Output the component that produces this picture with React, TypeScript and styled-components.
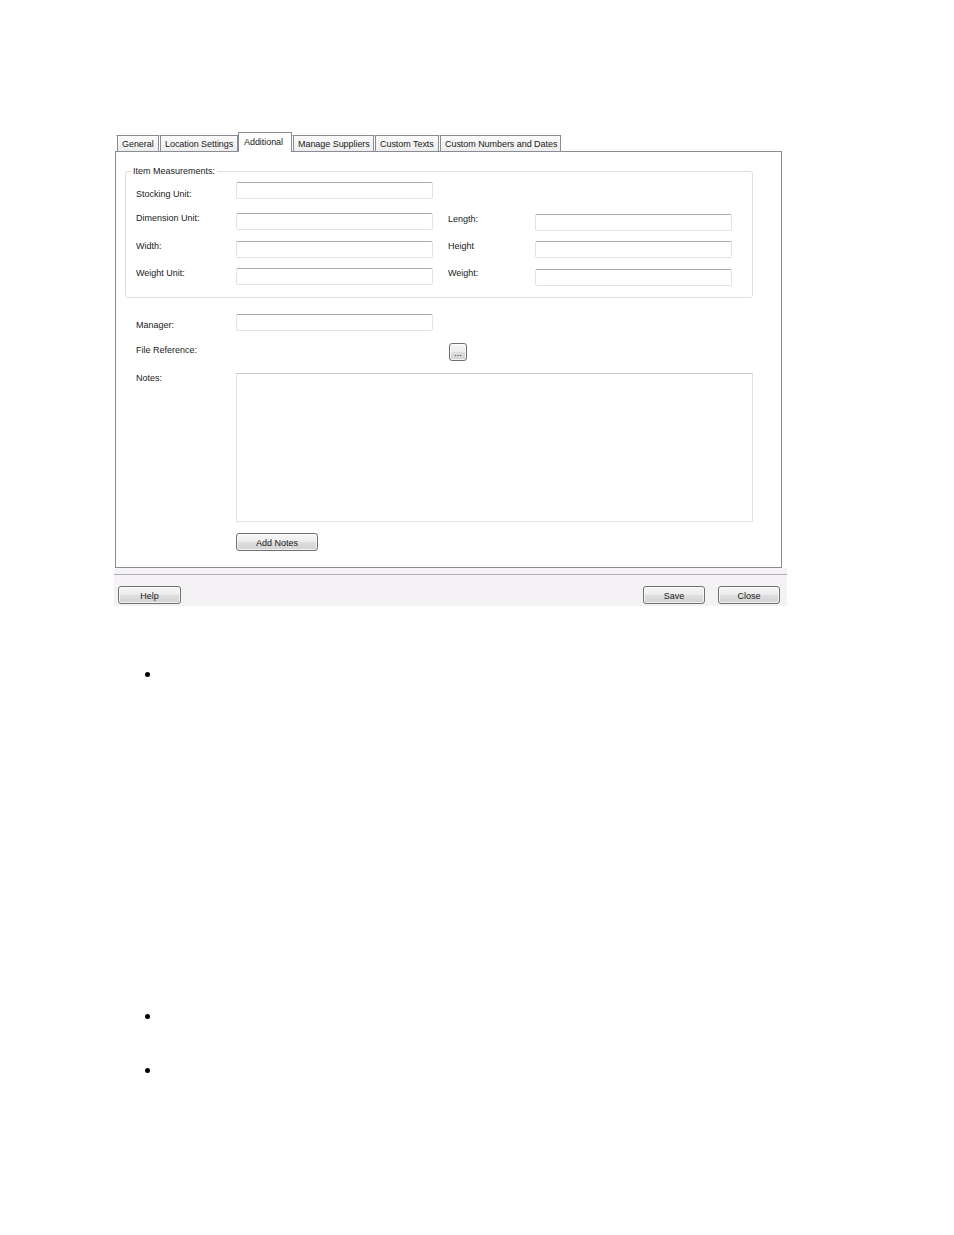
import React from "react";
import styled, { createGlobalStyle, css } from "styled-components";

const GlobalStyle = createGlobalStyle`
  html, body { margin: 0; padding: 0; background: #ffffff; }
  body { font-family: "Liberation Sans", Arial, sans-serif; color: #1a1a1a; }
  * { box-sizing: border-box; }
`;

const Page = styled.div`
  min-height: 1235px;
  padding: 132px 0 0 114px;
`;

const Dialog = styled.div`
  width: 673px;
  font-size: 9px;
  line-height: 12px;
`;

const TabStrip = styled.div`
  display: flex;
  align-items: flex-end;
  height: 19px;
  padding-left: 2px;
`;

const Tab = styled.div<{ $w: number; $active?: boolean }>`
  width: ${(p) => p.$w}px;
  height: 16px;
  border: 1px solid #898c95;
  border-bottom: none;
  border-left-color: #ffffff;
  box-shadow: inset 1px 0 0 #898c95;
  background: linear-gradient(#fbfbfb, #ededed);
  padding: 2px 0 0 5px;
  white-space: nowrap;
  letter-spacing: -0.05px;
  ${(p) =>
    p.$active &&
    css`
      position: relative;
      z-index: 1;
      height: 20px;
      margin-bottom: -1px;
      border-left-color: #898c95;
      box-shadow: none;
      background: #ffffff;
      padding-top: 3px;
      padding-left: 5px;
    `}
`;

const Panel = styled.div`
  width: 667px;
  height: 417px;
  margin-left: 1px;
  border: 1px solid #898c95;
  background: #ffffff;
  padding: 13px 0 0 9px;
`;

const Group = styled.fieldset`
  width: 628px;
  margin: 0;
  border: 1px solid #d8dfe6;
  border-radius: 3px;
  padding: 5px 0 12px 10px;
`;

const Legend = styled.legend`
  margin-left: -5px;
  padding: 0 2px;
  line-height: 12px;
`;

const GroupGrid = styled.div`
  display: grid;
  grid-template-columns: 100px 197px 15px 87px 197px;
  grid-template-rows: 31px 28px 27px 17px;
`;

const Label = styled.div<{ $col?: number; $dy?: number }>`
  grid-column: ${(p) => p.$col ?? 1};
  margin-top: ${(p) => p.$dy ?? 0}px;
  line-height: 12px;
  white-space: nowrap;
`;

const TextBox = styled.div<{ $col?: number; $dy?: number }>`
  grid-column: ${(p) => p.$col ?? 2};
  margin-top: ${(p) => p.$dy ?? 0}px;
  width: 197px;
  height: 17px;
  border: 1px solid #e2e3ea;
  border-top-color: #a6a8ad;
  border-radius: 2px;
  background: #ffffff;
`;

const Lower = styled.div`
  display: grid;
  grid-template-columns: 100px 517px;
  row-gap: 12px;
  margin: 16px 0 0 11px;
`;

const NotesBox = styled.div`
  height: 149px;
  border: 1px solid #e0e2e8;
  border-top-color: #c4c7cc;
  background: #ffffff;
`;

const Button = styled.div<{ $w: number; $ml?: number; $dy?: number }>`
  width: ${(p) => p.$w}px;
  height: 18px;
  margin-left: ${(p) => p.$ml ?? 0}px;
  margin-top: ${(p) => p.$dy ?? 0}px;
  border: 1px solid #707070;
  border-radius: 3px;
  background: linear-gradient(#f6f6f6 0%, #ececec 48%, #dedede 52%, #d2d2d2 100%);
  box-shadow: inset 0 0 0 1px rgba(255, 255, 255, 0.7);
  display: flex;
  align-items: center;
  justify-content: center;
  line-height: 12px;
  padding-top: 1px;
  white-space: nowrap;
`;

const Bottom = styled.div`
  background: #f5f2f5;
  padding-top: 6px;
`;

const Separator = styled.div`
  height: 1px;
  background: #b0b0b4;
`;

const Footer = styled.div`
  display: flex;
  align-items: flex-start;
  height: 31px;
  padding: 11px 7px 0 4px;
  gap: 13px;
`;

const Spacer = styled.div`
  flex: 1;
`;

const BulletList = styled.ul`
  list-style: none;
  margin: 66px 0 0 31px;
  padding: 0;
`;

const Bullet = styled.li<{ $h: number }>`
  height: ${(p) => p.$h}px;
  &::before {
    content: "";
    display: block;
    width: 5px;
    height: 5px;
    border-radius: 50%;
    background: #000;
  }
`;

const tabs: { label: string; w: number; active?: boolean }[] = [
  { label: "General", w: 43 },
  { label: "Location Settings", w: 79 },
  { label: "Additional", w: 54, active: true },
  { label: "Manage Suppliers", w: 82 },
  { label: "Custom Texts", w: 65 },
  { label: "Custom Numbers and Dates", w: 122 },
];

export default function App() {
  return (
    <>
      <GlobalStyle />
      <Page>
        <Dialog>
          <TabStrip>
            {tabs.map((t) => (
              <Tab key={t.label} $w={t.w} $active={t.active}>
                {t.label}
              </Tab>
            ))}
          </TabStrip>
          <Panel>
            <Group>
              <Legend>Item Measurements:</Legend>
              <GroupGrid>
                <Label $dy={6}>Stocking Unit:</Label>
                <TextBox />
                <Label $col={1} $dy={-1}>Dimension Unit:</Label>
                <TextBox />
                <Label $col={4} $dy={0}>Length:</Label>
                <TextBox $col={5} $dy={1} />
                <Label $col={1} $dy={-1}>Width:</Label>
                <TextBox />
                <Label $col={4} $dy={-1}>Height</Label>
                <TextBox $col={5} />
                <Label $col={1} $dy={-1}>Weight Unit:</Label>
                <TextBox />
                <Label $col={4} $dy={-1}>Weight:</Label>
                <TextBox $col={5} $dy={1} />
              </GroupGrid>
            </Group>
            <Lower>
              <Label $dy={5}>Manager:</Label>
              <TextBox />
              <Label $dy={1}>File Reference:</Label>
              <Button $w={18} $ml={213}>...</Button>
              <Label $dy={-1}>Notes:</Label>
              <NotesBox />
              <div />
              <Button $w={82} $dy={-1}>Add Notes</Button>
            </Lower>
          </Panel>
          <Bottom>
            <Separator />
            <Footer>
              <Button $w={63}>Help</Button>
              <Spacer />
              <Button $w={62}>Save</Button>
              <Button $w={62}>Close</Button>
            </Footer>
          </Bottom>
        </Dialog>
        <BulletList>
          <Bullet $h={342} />
          <Bullet $h={54} />
          <Bullet $h={20} />
        </BulletList>
      </Page>
    </>
  );
}
